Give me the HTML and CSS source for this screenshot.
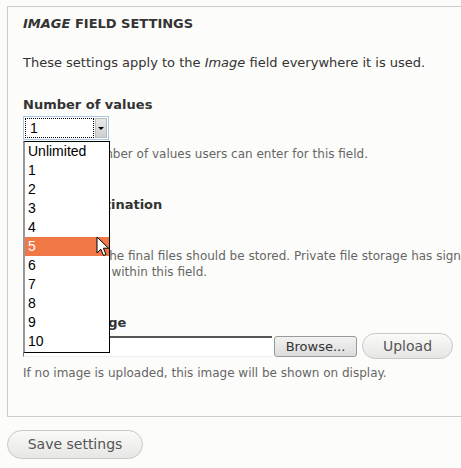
FILE: index.html
```html
<!DOCTYPE html>
<html>
<head>
<meta charset="utf-8">
<link rel="stylesheet" href="styles.css">
</head>
<body>
<div class="page">
  <fieldset class="settings">
    <h2 class="title"><em>Image</em> field settings</h2>
    <p class="intro">These settings apply to the <em>Image</em> field everywhere it is used.</p>

    <div class="item item-cardinality">
      <label class="label">Number of values</label>
      <div class="select-wrap">
        <div class="select">
          <span class="select-value">1</span>
          <span class="select-arrow"><span class="tri"></span></span>
        </div>
        <ul class="dropdown">
          <li>Unlimited</li>
          <li>1</li>
          <li>2</li>
          <li>3</li>
          <li>4</li>
          <li class="active">5</li>
          <li>6</li>
          <li>7</li>
          <li>8</li>
          <li>9</li>
          <li>10</li>
        </ul>
        <svg class="cursor" width="14" height="21" viewBox="0 0 14 21"><path d="M1 1 L1 17 L4.8 13.2 L7.5 19.5 L10 18.5 L7.4 12.2 L12.5 12.2 Z" fill="#fff" stroke="#000" stroke-width="1" stroke-linejoin="miter"/></svg>
      </div>
      <div class="description">Maximum number of values users can enter for this field.</div>
    </div>

    <div class="item item-destination">
      <label class="label">Upload destination</label>
      <div class="radios"></div>
      <div class="description nowrap">Select where the final files should be stored. Private file storage has significantly more overhead than public files, but allows restricted<br>access to files within this field.</div>
    </div>

    <div class="item item-default">
      <label class="label">Default image</label>
      <div class="file-row">
        <span class="file-text"></span>
        <span class="browse">Browse...</span>
        <span class="btn btn-upload">Upload</span>
      </div>
      <div class="description">If no image is uploaded, this image will be shown on display.</div>
    </div>
  </fieldset>

  <div class="actions">
    <span class="btn btn-save">Save settings</span>
  </div>
</div>
</body>
</html>
```

FILE: styles.css
```css
html {
  overflow: hidden;
}
body {
  margin: 0;
  background: #fcfcfa;
  font-family: "DejaVu Sans", sans-serif;
  color: #333;
}
.page {
  padding: 6px 0 0 7px;
}
.settings {
  margin: 0;
  width: 900px;
  border: 1px solid #ccc;
  padding: 0 15px 35px 15px;
  box-sizing: border-box;
}
.title {
  margin: 9px 0 0 0;
  font-size: 13px;
  line-height: 16px;
  font-weight: bold;
  text-transform: uppercase;
  color: #333;
}
.intro {
  margin: 22px 0 0 0;
  font-size: 13px;
  line-height: 18px;
}
.item {
  margin-top: 25px;
}
.item-destination,
.item-default {
  margin-top: 35px;
}
.label {
  display: block;
  font-size: 13px;
  line-height: 16px;
  font-weight: bold;
}
.description {
  font-size: 12px;
  line-height: 16px;
  color: #666;
}
.nowrap {
  white-space: nowrap;
}
.select-wrap {
  position: relative;
  margin-top: 3px;
  width: 86px;
}
.select {
  display: flex;
  height: 24px;
  box-sizing: border-box;
  border: 1px solid #a9c6e6;
  padding: 1px;
  background: #fff;
}
.select-value {
  flex: 1;
  border: 1px dotted #000;
  font-family: "Liberation Sans", Arial, sans-serif;
  font-size: 14px;
  line-height: 18px;
  padding-left: 4px;
  color: #000;
}
.select-arrow {
  width: 12px;
  margin-left: 1px;
  background: linear-gradient(#e8e8e8, #cfcfcf);
  border: 1px solid #bbb;
  box-sizing: border-box;
  display: flex;
  align-items: center;
  justify-content: center;
}
.tri {
  width: 0;
  height: 0;
  border-left: 3px solid transparent;
  border-right: 3px solid transparent;
  border-top: 3px solid #000;
}
.item-cardinality .description {
  margin-top: 6px;
}
.dropdown {
  position: absolute;
  left: 0;
  top: 25px;
  margin: 0;
  padding: 0 0 1px 0;
  list-style: none;
  width: 87px;
  box-sizing: border-box;
  background: #fff;
  border: 1px solid #000;
  border-left: 2px solid #999;
  z-index: 2;
  font-family: "Liberation Sans", Arial, sans-serif;
  font-size: 14px;
  color: #000;
}
.dropdown li {
  height: 19px;
  line-height: 19px;
  padding-left: 3px;
}
.dropdown li.active {
  background: #f07746;
  color: #fff;
}
.cursor {
  position: absolute;
  left: 73px;
  top: 120px;
  z-index: 3;
}
.radios {
  height: 35px;
}
.file-row {
  display: flex;
  align-items: center;
  margin-top: 2px;
  height: 26px;
}
.file-text {
  width: 249px;
  height: 21px;
  box-sizing: border-box;
  background: #fff;
  border-top: 2px solid #555;
  border-left: 1px solid #777;
  border-bottom: 1px solid #eee;
}
.browse {
  margin-left: 2px;
  width: 83px;
  height: 21px;
  box-sizing: border-box;
  border: 1px solid #999;
  border-radius: 3px;
  background: linear-gradient(#f2f2f2, #dcdcdc);
  font-size: 13px;
  line-height: 19px;
  text-align: center;
  color: #333;
}
.btn {
  display: inline-block;
  box-sizing: border-box;
  border: 1px solid #c8c8c8;
  border-radius: 20px;
  background: linear-gradient(#fafaf9, #e6e6e4);
  font-size: 14px;
  color: #555;
  text-align: center;
}
.btn-upload {
  margin-left: 5px;
  width: 91px;
  height: 26px;
  line-height: 24px;
}
.item-default .description {
  margin-top: 6px;
}
.actions {
  margin-top: 13px;
}
.btn-save {
  width: 136px;
  height: 29px;
  line-height: 27px;
}
```
